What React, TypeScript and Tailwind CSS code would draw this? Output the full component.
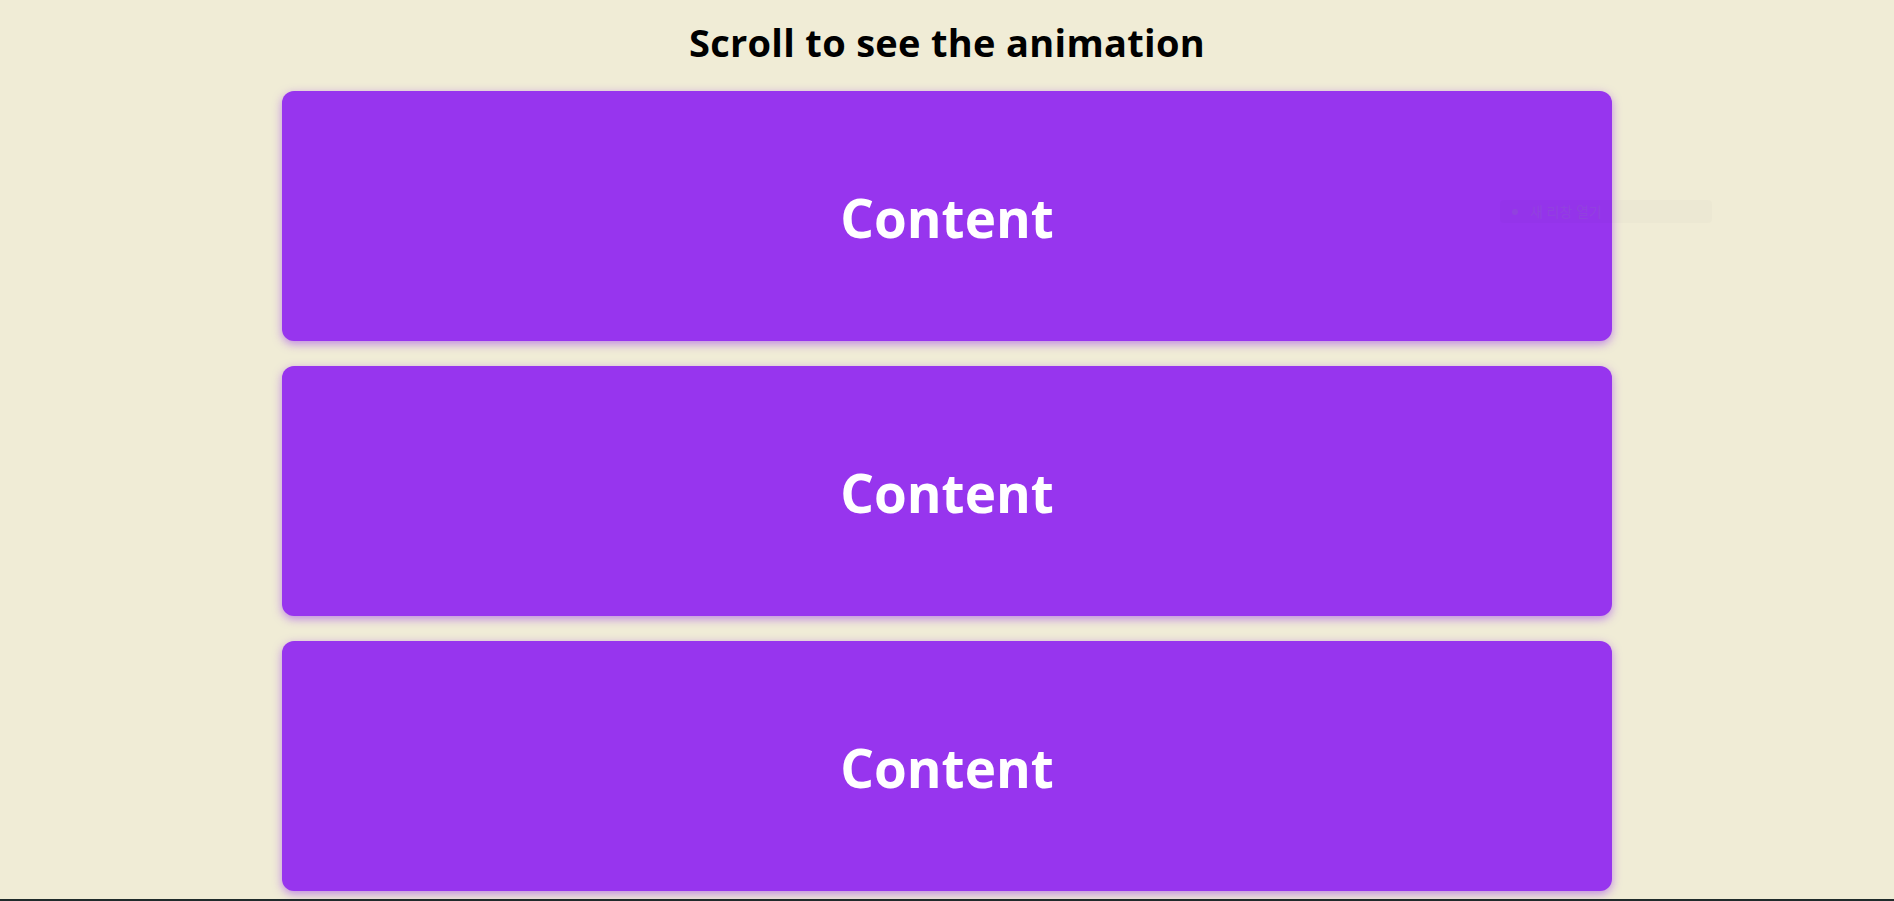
import React from 'react';

const cards = ['Content', 'Content', 'Content'];

const Card: React.FC<{ label: string }> = ({ label }) => (
  <div className="h-[250px] w-[1330px] mx-auto flex items-center justify-center rounded-[12px] bg-[#9735ee] shadow-[0_3px_10px_rgba(151,53,238,0.55)]">
    <span className="text-[53px] font-bold text-white leading-none pt-[3px]">{label}</span>
  </div>
);

export default function App() {
  return (
    <div className="min-h-screen bg-[#f0ecd6] font-['Open_Sans','Noto_Sans_CJK_KR',sans-serif] relative">
      <h1 className="pt-[18px] pb-[25px] text-center text-[38px] font-bold text-black leading-[48px] tracking-[0.3px]">
        Scroll to see the animation
      </h1>
      <div className="flex flex-col gap-[25px]">
        {cards.map((c, i) => (
          <Card key={i} label={c} />
        ))}
      </div>

      {/* faint floating hint */}
      <div className="absolute left-[1500px] top-[200px] w-[212px] h-[23px] flex items-center gap-3 px-3 rounded-sm bg-black/[0.03] opacity-40">
        <span className="w-[6px] h-[6px] rounded-full bg-[#8a55c8]" />
        <span className="text-[14px] text-[#8a55c8]">새 리창 열기</span>
      </div>

      <div className="fixed bottom-0 left-0 right-0 h-[2px] bg-[#1f2b2b]" />
    </div>
  );
}
